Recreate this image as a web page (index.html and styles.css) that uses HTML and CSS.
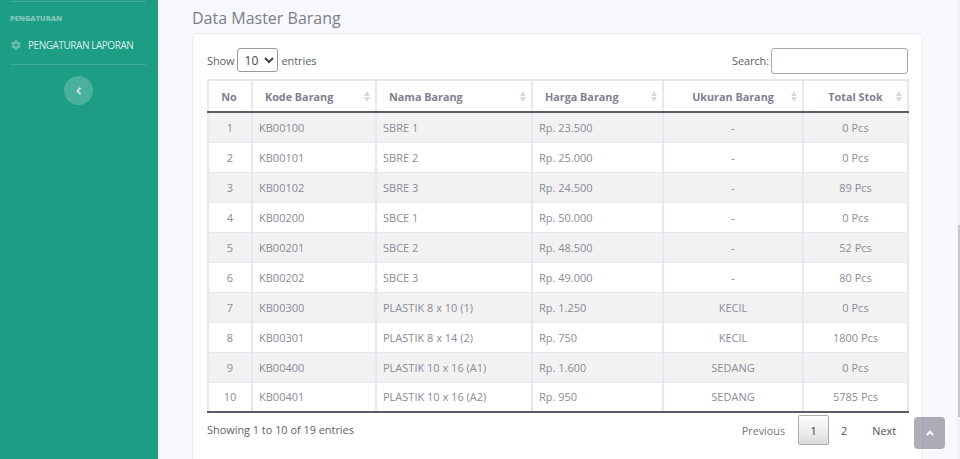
FILE: index.html
```html
<!DOCTYPE html>
<html lang="id">
<head>
<meta charset="utf-8">
<title>Data Master Barang</title>
<link rel="stylesheet" href="styles.css">
</head>
<body>
<div class="app">
  <aside class="sidebar">
    <hr class="divider divider-top">
    <div class="heading">PENGATURAN</div>
    <a class="nav-link">
      <svg class="gear" viewBox="0 0 512 512"><path fill="currentColor" d="M487 316l-42-25c4-23 4-47 0-70l42-25c5-3 7-9 6-14-11-35-30-67-54-93-4-4-10-5-15-2l-42 24c-18-15-38-27-60-35V28c0-6-4-11-9-12-37-8-74-8-109 0-6 1-10 6-10 12v48c-22 8-42 20-60 35L92 87c-5-3-11-2-15 2-24 26-43 58-54 93-2 5 1 11 6 14l42 25c-4 23-4 47 0 70l-42 25c-5 3-7 9-6 14 11 35 30 67 54 93 4 4 10 5 15 2l42-24c18 15 38 27 60 35v48c0 6 4 11 10 12 36 8 73 8 108 0 6-1 10-6 10-12v-48c22-8 42-20 60-35l42 24c5 3 11 2 15-2 24-26 43-58 54-93 1-5-1-11-6-14zM256 336c-44 0-80-36-80-80s36-80 80-80 80 36 80 80-36 80-80 80z"/></svg>
      <span>PENGATURAN LAPORAN</span>
    </a>
    <hr class="divider">
    <button class="toggle" type="button">
      <svg viewBox="0 0 10 12" class="chev"><path d="M7 2 3 6l4 4" fill="none" stroke="currentColor" stroke-width="2.6"/></svg>
    </button>
  </aside>
  <main class="content">
    <h1 class="title">Data Master Barang</h1>
    <section class="card">
      <div class="controls">
        <label class="ctl"><span class="lbl">Show</span><select class="select"><option>10</option></select><span class="lbl">entries</span></label>
        <label class="ctl"><span class="lbl">Search:</span><input class="input" type="text"></label>
      </div>
      <table class="table">
        <colgroup>
          <col class="c1"><col class="c2"><col class="c3"><col class="c4"><col class="c5"><col class="c6">
        </colgroup>
        <thead>
          <tr>
            <th class="center no">No</th>
            <th class="sort pad-l">Kode Barang</th>
            <th class="sort pad-l">Nama Barang</th>
            <th class="sort pad-l">Harga Barang</th>
            <th class="sort center">Ukuran Barang</th>
            <th class="sort center">Total Stok</th>
          </tr>
        </thead>
        <tbody>
          <tr><td class="center no">1</td><td>KB00100</td><td>SBRE 1</td><td>Rp. 23.500</td><td class="center">-</td><td class="center">0 Pcs</td></tr>
          <tr><td class="center no">2</td><td>KB00101</td><td>SBRE 2</td><td>Rp. 25.000</td><td class="center">-</td><td class="center">0 Pcs</td></tr>
          <tr><td class="center no">3</td><td>KB00102</td><td>SBRE 3</td><td>Rp. 24.500</td><td class="center">-</td><td class="center">89 Pcs</td></tr>
          <tr><td class="center no">4</td><td>KB00200</td><td>SBCE 1</td><td>Rp. 50.000</td><td class="center">-</td><td class="center">0 Pcs</td></tr>
          <tr><td class="center no">5</td><td>KB00201</td><td>SBCE 2</td><td>Rp. 48.500</td><td class="center">-</td><td class="center">52 Pcs</td></tr>
          <tr><td class="center no">6</td><td>KB00202</td><td>SBCE 3</td><td>Rp. 49.000</td><td class="center">-</td><td class="center">80 Pcs</td></tr>
          <tr><td class="center no">7</td><td>KB00300</td><td>PLASTIK 8 x 10 (1)</td><td>Rp. 1.250</td><td class="center">KECIL</td><td class="center">0 Pcs</td></tr>
          <tr><td class="center no">8</td><td>KB00301</td><td>PLASTIK 8 x 14 (2)</td><td>Rp. 750</td><td class="center">KECIL</td><td class="center">1800 Pcs</td></tr>
          <tr><td class="center no">9</td><td>KB00400</td><td>PLASTIK 10 x 16 (A1)</td><td>Rp. 1.600</td><td class="center">SEDANG</td><td class="center">0 Pcs</td></tr>
          <tr><td class="center no">10</td><td>KB00401</td><td>PLASTIK 10 x 16 (A2)</td><td>Rp. 950</td><td class="center">SEDANG</td><td class="center">5785 Pcs</td></tr>
        </tbody>
      </table>
      <div class="footer">
        <div class="info">Showing 1 to 10 of 19 entries</div>
        <nav class="pager">
          <a class="page muted">Previous</a>
          <a class="page current">1</a>
          <a class="page tight">2</a>
          <a class="page last">Next</a>
        </nav>
      </div>
    </section>
  </main>
  <div class="scrollbar"><div class="thumb"></div></div>
</div>
<a class="to-top">
  <svg viewBox="0 0 12 10" class="up"><path d="M2 7.5 6 3.5l4 4" fill="none" stroke="currentColor" stroke-width="2.8"/></svg>
</a>
</body>
</html>
```
FILE: styles.css
```css
* { box-sizing: border-box; }
html, body { margin: 0; height: 459px; overflow: hidden; }
body { font-family: "Open Sans", "Noto Sans", sans-serif; font-size: 12px; color: #858796; background: #f8f9fc; }
.app { display: flex; height: 459px; }

.sidebar { width: 158px; flex: none; background: #1c9d84; padding: 1px 10px 0; display: flex; flex-direction: column; }
.divider { width: 136px; margin: 0; border: 0; border-top: 1px solid rgba(255,255,255,.15); }
.heading { margin-top: 11px; height: 10px; line-height: 10px; font-size: 7.4px; font-weight: 800; color: rgba(255,255,255,.45); }
.nav-link { display: flex; align-items: center; height: 41px; padding: 2px 0 0 1px; gap: 7px; color: rgba(255,255,255,.85); font-size: 10px; letter-spacing: -.45px; white-space: nowrap; }
.gear { width: 10px; height: 10px; color: rgba(255,255,255,.35); }
.toggle { width: 29px; height: 29px; margin: 11px 0 0 54px; padding: 0; border: 0; border-radius: 50%; background: rgba(255,255,255,.2); color: rgba(255,255,255,.65); display: flex; align-items: center; justify-content: center; }
.chev { width: 8px; height: 10px; }

.content { flex: 1; padding: 0 0 0 34px; }
.title { margin: 8px 0 0; height: 25px; line-height: 20px; font-size: 16px; font-weight: 400; color: #7b7d8c; }
.card { width: 731px; height: 440px; background: #fff; border: 1px solid #e9ebf3; border-radius: 5px; padding: 14px 14px 0; }

.controls { display: flex; justify-content: space-between; align-items: center; height: 26px; margin-bottom: 5px; color: #5f6066; font-size: 11px; letter-spacing: -.1px; }
.ctl { display: flex; align-items: center; }
.lbl { margin-bottom: 2px; }
.select { width: 41px; height: 24px; margin: 0 4px 2px 2px; padding: 0 0 0 3px; font: 12px "Open Sans", sans-serif; color: #444; background: #fff; border: 1px solid #9a9a9a; border-radius: 3px; }
.input { width: 137px; height: 26px; margin-left: 2px; border: 1px solid #a8a8ac; border-radius: 3px; background: #fff; padding: 0; }

.table { width: 700px; table-layout: fixed; border-collapse: collapse; font-size: 11px; }
.c1 { width: 44px; } .c2 { width: 124px; } .c3 { width: 156px; } .c4 { width: 131px; } .c5 { width: 140px; } .c6 { width: 105px; }
th, td { border: 1px solid #e6e8f1; border-left-width: 2px; border-right-width: 2px; padding: 0 0 0 6px; white-space: nowrap; }
th { height: 32px; font-size: 10.8px; font-weight: 700; color: #7e808f; border-bottom: 2px solid #5b5d66; border-top: 2px solid #e6e8f1; background: #fff; }
th.center { text-align: center; padding: 0; }
th.pad-l { text-align: left; padding-left: 12px; }
th.no, td.no { padding-right: 2px; }
.sort { position: relative; }
.sort::before, .sort::after { content: ""; position: absolute; right: 5px; width: 0; height: 0; border-left: 3px solid transparent; border-right: 3px solid transparent; }
.sort::before { top: 10px; border-bottom: 5px solid #d8d9e0; }
.sort::after { top: 16px; border-top: 5px solid #d8d9e0; }
td { height: 30px; color: #8a8b96; }
td.center { text-align: center; padding: 0; }
tbody tr:nth-child(odd) td { background: #f2f2f2; }
tbody tr:last-child td { border-bottom: 2px solid #5b5d66; }

.footer { display: flex; justify-content: space-between; align-items: flex-start; margin-top: 2px; }
.info { color: #5f6066; font-size: 10.9px; margin-top: 7px; }
.pager { display: flex; align-items: center; height: 30px; font-size: 10.8px; }
.page { display: flex; align-items: center; justify-content: center; height: 30px; padding: 0 13px; color: #4f5058; }
.page.muted { color: #777; }
.page.tight { padding: 0 12px 0 11px; }
.page.last { padding-right: 12px; }
.current { width: 31px; margin-right: 1px; padding: 0; border: 1px solid #a9a9a9; border-radius: 2px; background: linear-gradient(#fff, #dcdcdc); color: #333; }

.scrollbar { width: 3px; flex: none; background: #f1f2f6; position: relative; }
.thumb { position: absolute; left: 1px; right: 0; top: 225px; height: 192px; background: #c8c9cc; }
.to-top { position: absolute; left: 914px; top: 417px; width: 31px; height: 32px; border-radius: 4px; background: rgba(95,96,115,.5); color: rgba(255,255,255,.9); display: flex; align-items: center; justify-content: center; }
.up { width: 10px; height: 8px; }
```
